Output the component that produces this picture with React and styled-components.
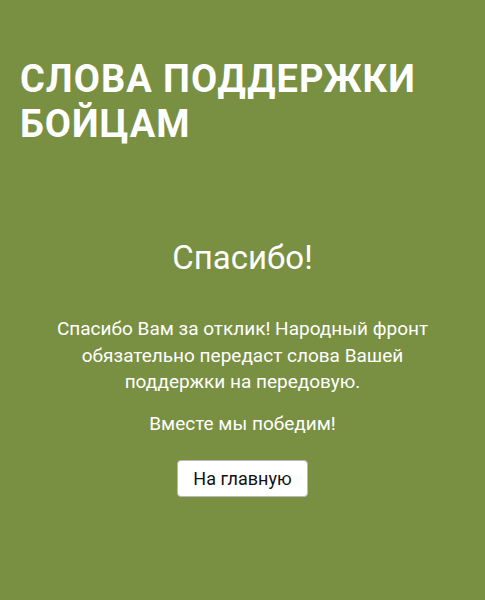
import React from "react";
import styled, { createGlobalStyle } from "styled-components";

const Global = createGlobalStyle`
  html, body { margin: 0; padding: 0; background: #798f42; }
  body { font-family: Roboto, "Noto Sans", sans-serif; }
`;

const Page = styled.div`
  width: 485px;
  height: 600px;
  background: #798f42;
  color: #fff;
  box-sizing: border-box;
  padding: 57px 20px 0;
  display: flex;
  flex-direction: column;
`;

const Title = styled.h1`
  margin: 0;
  font-family: Roboto, sans-serif;
  font-weight: 700;
  font-size: 38px;
  line-height: 45px;
  letter-spacing: 1px;
  text-transform: uppercase;
`;

const Content = styled.div`
  display: flex;
  flex-direction: column;
  align-items: center;
  text-align: center;
  padding-top: 91px;
`;

const Thanks = styled.h2`
  margin: 0;
  font-weight: 400;
  font-size: 33px;
  line-height: 40px;
`;

const Text = styled.p`
  margin: ${(p) => p.$mt || 0}px 0 0;
  font-size: 19px;
  line-height: 26.5px;
  max-width: 390px;
`;

const Button = styled.button`
  margin-top: 23px;
  background: #fff;
  color: #111;
  border: 1px solid #b9b9b9;
  border-radius: 4px;
  font-family: Roboto, sans-serif;
  font-size: 18px;
  padding: 0;
  height: 37px;
  width: 131px;
`;

export default function App() {
  return (
    <Page>
      <Global />
      <Title>Слова поддержки бойцам</Title>
      <Content>
        <Thanks>Спасибо!</Thanks>
        <Text $mt={38}>
          Спасибо Вам за отклик! Народный фронт обязательно передаст слова Вашей
          поддержки на передовую.
        </Text>
        <Text $mt={15}>Вместе мы победим!</Text>
        <Button>На главную</Button>
      </Content>
    </Page>
  );
}
